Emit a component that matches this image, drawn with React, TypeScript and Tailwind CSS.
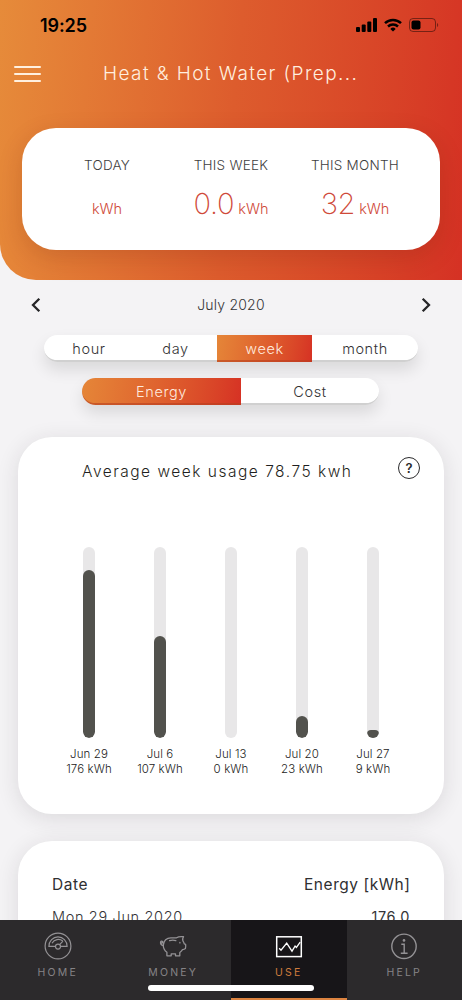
import type { ReactNode } from 'react';
import clsx from 'clsx';

type Week = {
  label: string;
  kwh: number;
  height: number;
};

const weeks: Week[] = [
  { label: 'Jun 29', kwh: 176, height: 168 },
  { label: 'Jul 6', kwh: 107, height: 102 },
  { label: 'Jul 13', kwh: 0, height: 0 },
  { label: 'Jul 20', kwh: 23, height: 22 },
  { label: 'Jul 27', kwh: 9, height: 8 },
];

function StatusBar() {
  return (
    <div className="flex h-[50px] items-center justify-between pl-10 pr-[22px] text-black">
      <span className="mt-[2px] text-[18px] font-semibold leading-none tracking-[-0.1px]">
        19:25
      </span>
      <div className="flex items-center gap-[7px]">
        <svg width="21" height="14" viewBox="0 0 21 14" fill="currentColor">
          <rect x="0" y="9" width="4" height="5" rx="1" />
          <rect x="5.7" y="6.5" width="4" height="7.5" rx="1" />
          <rect x="11.3" y="3.5" width="4" height="10.5" rx="1" />
          <rect x="17" y="0" width="4" height="14" rx="1" />
        </svg>
        <svg
          width="18"
          height="14"
          viewBox="0 0 18 14"
          fill="none"
          stroke="currentColor"
          strokeWidth="2.5"
        >
          <path d="M1 5.1a11.6 11.6 0 0 1 16 0" />
          <path d="M4 8.5a7.3 7.3 0 0 1 10 0" />
          <path d="M9 13.6 6.3 10.9a3.9 3.9 0 0 1 5.4 0Z" fill="currentColor" stroke="none" />
        </svg>
        <svg width="31" height="14" viewBox="0 0 31 14">
          <rect
            x="0.5"
            y="0.5"
            width="26"
            height="13"
            rx="3.5"
            fill="none"
            stroke="black"
            strokeOpacity="0.45"
          />
          <rect x="2.5" y="2.5" width="9" height="9" rx="2" />
          <path d="M28 5v4c1.6-.6 1.6-3.4 0-4Z" fillOpacity="0.45" />
        </svg>
      </div>
    </div>
  );
}

type StatProps = {
  title: string;
  value?: string;
};

function Stat({ title, value }: StatProps) {
  return (
    <div className="flex w-[124px] flex-col items-center whitespace-nowrap">
      <span className="text-[13.5px] font-light leading-5 tracking-[0.25px] text-[#3e3e40]">
        {title}
      </span>
      <span className="mt-[10px] h-9 text-[14.5px] font-light leading-[38px] text-[#cf4a3a]">
        {value ? (
          <>
            <span className="mr-1 text-[29px] font-extralight tracking-[-0.3px]">{value}</span>
            kWh
          </>
        ) : (
          <span className="block pt-[5px]">kWh</span>
        )}
      </span>
    </div>
  );
}

type SegmentProps = {
  active?: boolean;
  className: string;
  children: ReactNode;
};

function Segment({ active, className, children }: SegmentProps) {
  return (
    <button
      className={clsx(
        'flex h-[27px] items-center justify-center border-b-2 pt-[3px] text-[14.5px] font-light leading-none tracking-[0.6px]',
        active
          ? 'border-[#b8401f]/60 bg-linear-100 from-[#e58638] to-[#d63124] bg-origin-border text-[#ffeade]'
          : 'border-[#d0d0d0] bg-white text-[#333335]',
        className,
      )}
    >
      {children}
    </button>
  );
}

function Bar({ label, kwh, height }: Week) {
  return (
    <div className="flex w-[71px] flex-col items-center">
      <div className="flex h-[191px] w-3 items-end overflow-hidden rounded-full bg-[#e8e7e8]">
        <div className="w-full rounded-full bg-[#52524d]" style={{ height }} />
      </div>
      <span className="mt-[9px] whitespace-nowrap text-center text-[11.5px] font-light leading-[14.5px] tracking-[0.1px] text-[#222]">
        {label}
        <br />
        {kwh} kWh
      </span>
    </div>
  );
}

function GaugeIcon() {
  return (
    <svg width="28" height="28" viewBox="0 0 28 28" fill="none" stroke="currentColor" strokeWidth="1.2">
      <circle cx="14" cy="14" r="12.9" />
      <path d="M11.4 14.4H4.9a9.1 9.6 0 0 1 18.2 0h-6.5" />
      <circle cx="14" cy="14.6" r="2.5" />
      <path d="m15.6 12.7 3.4-3.5M8 11.2c2.4-4 7.2-4.9 10.8-2.2" />
    </svg>
  );
}

function PiggyIcon() {
  return (
    <svg
      width="28"
      height="28"
      viewBox="0 0 28 28"
      fill="none"
      stroke="currentColor"
      strokeWidth="1.3"
      strokeLinejoin="round"
      strokeLinecap="round"
    >
      <path d="M4.3 13.2C4.5 8.6 7.8 5.8 11.8 5.8h5.8c1.7-1.2 4-1.5 6.9-1.1-.9 1.5-1 2.8-.6 4.2.7.9 1.1 1.9 1.4 3l1.3.5c.3 1.4.2 2.8-.2 4.1-.8.7-1.8 1-2.9 1.2-.8 1.3-1.7 2.1-2.7 2.8v3.3h-4.3v-1.9h-4.3v1.9H7.9v-3.5c-2.5-1.9-3.7-4.2-3.6-7.1Z" />
      <path d="M4.3 13.6C2.2 13.2 1.2 11.6 1.6 10c.4-1.4 2.2-1.2 2.1.1-.1.8-.8 1.1-1.5.8M10.6 8.7c2.1-.8 4.2-.8 6.2 0M20.9 10.4v.5" />
    </svg>
  );
}

function ChartIcon() {
  return (
    <svg width="28" height="28" viewBox="0 0 28 28" fill="none" stroke="currentColor" strokeWidth="1.5">
      <rect x="1.7" y="4.8" width="24.6" height="19.8" />
      <path d="m4.2 16.3 1.800 1.900 5.700-7 5.300 8 3.100-5.200 1.300 1.400 3.800-5.200" strokeWidth="1.3" />
    </svg>
  );
}

function InfoIcon() {
  return (
    <svg width="28" height="28" viewBox="0 0 28 28" fill="none" stroke="currentColor" strokeWidth="1.4">
      <circle cx="14" cy="14.3" r="12.2" />
      <path d="M11.3 12.2h2.9v8.8M10.8 21.3h6.8" />
      <circle cx="14" cy="8.4" r="1.3" fill="currentColor" stroke="none" />
    </svg>
  );
}

type NavItemProps = {
  icon: ReactNode;
  label: string;
  active?: boolean;
};

function NavItem({ icon, label, active }: NavItemProps) {
  return (
    <a
      className={clsx(
        'flex flex-1 flex-col items-center border-b-2 pt-3',
        active
          ? 'border-[#dc8340] bg-[#171518] text-white'
          : 'border-transparent text-[#949295]',
      )}
    >
      {icon}
      <span
        className={clsx(
          'mt-[5px] text-[10.5px] leading-4 tracking-[2.2px]',
          active ? 'text-[#cf7c3d]' : 'text-[#858386]',
        )}
      >
        {label}
      </span>
    </a>
  );
}

export default function App() {
  return (
    <div className="relative flex h-[1000px] w-full flex-col overflow-hidden bg-[#f4f3f5] font-['Inter','Liberation_Sans',sans-serif]">
      <header className="h-[280px] shrink-0 rounded-bl-[36px] bg-linear-95 from-[#e68b3a] via-[#dd5c2d] to-[#d53124]">
        <StatusBar />
        <div className="flex h-12 items-center pl-[14px]">
          <div className="flex w-[27px] flex-col gap-[5px]">
            <span className="h-[2px] rounded-full bg-[#fff0df]" />
            <span className="h-[2px] rounded-full bg-[#fff0df]" />
            <span className="h-[2px] rounded-full bg-[#fff0df]" />
          </div>
          <h1 className="ml-[62px] mt-px whitespace-nowrap text-[19px] font-light tracking-[1.4px] text-[#ffeedf]">
            Heat &amp; Hot Water (Prep...
          </h1>
        </div>
        <section className="mx-[22px] mt-[30px] flex h-[122px] rounded-[34px] bg-white pl-[23px] pt-[27px] shadow-[0_8px_24px_rgba(100,30,10,0.18)]">
          <Stat title="TODAY" />
          <Stat title="THIS WEEK" value="0.0" />
          <Stat title="THIS MONTH" value="32" />
        </section>
      </header>

      <div className="flex h-[50px] shrink-0 items-center justify-between px-[30px]">
        <svg width="12" height="16" viewBox="0 0 12 16" fill="none" stroke="#252527" strokeWidth="2.3">
          <path d="M9.3 1.7 3 8l6.3 6.3" />
        </svg>
        <span className="-mt-[2px] text-[14px] font-light tracking-[0.2px] text-[#353537]">
          July 2020
        </span>
        <svg width="12" height="16" viewBox="0 0 12 16" fill="none" stroke="#252527" strokeWidth="2.3">
          <path d="M2.7 1.7 9 8l-6.3 6.3" />
        </svg>
      </div>

      <div className="mx-auto mt-[5px] flex w-[374px] shrink-0 rounded-full shadow-[0_8px_16px_rgba(0,0,0,0.11)]">
        <Segment className="w-[90px] rounded-l-full">hour</Segment>
        <Segment className="w-[83px]">day</Segment>
        <Segment active className="w-[95px]">
          week
        </Segment>
        <Segment className="w-[106px] rounded-r-full">month</Segment>
      </div>
      <div className="ml-[82px] mt-4 flex w-[297px] shrink-0 rounded-full shadow-[0_8px_16px_rgba(0,0,0,0.11)]">
        <Segment active className="w-[159px] rounded-l-full">
          Energy
        </Segment>
        <Segment className="w-[138px] rounded-r-full">Cost</Segment>
      </div>

      <section className="mx-[18px] mt-8 h-[377px] shrink-0 rounded-[34px] bg-white shadow-[0_4px_22px_rgba(40,30,40,0.12)]">
        <div className="flex h-[46px] items-start justify-between pl-[64px] pr-6 pt-5">
          <h2 className="mt-[3px] whitespace-nowrap text-[15.5px] font-light leading-6 tracking-[1.5px] text-[#1f1f21]">
            Average week usage 78.75 kwh
          </h2>
          <span className="flex size-[22px] items-center justify-center rounded-full border-[1.5px] border-[#2b2b2d] text-[13px] font-semibold leading-none text-[#2b2b2d]">
            ?
          </span>
        </div>
        <div className="ml-[35.5px] mt-[64px] flex">
          {weeks.map((week) => (
            <Bar key={week.label} {...week} />
          ))}
        </div>
      </section>

      <section className="mx-[18px] mt-[27px] h-[200px] shrink-0 rounded-[34px] bg-white px-[34px] pt-[32px] shadow-[0_4px_22px_rgba(40,30,40,0.12)]">
        <div className="flex justify-between text-[15.5px] leading-6 tracking-[0.55px] text-[#2f2f31]">
          <span>Date</span>
          <span className="-mr-[0.5px]">Energy [kWh]</span>
        </div>
        <div className="mt-2 flex justify-between text-[14.5px] leading-6 tracking-[0.65px] text-[#353537]">
          <span className="font-light">Mon 29 Jun 2020</span>
          <span>176.0</span>
        </div>
      </section>

      <nav className="absolute inset-x-0 bottom-0 flex h-20 bg-[#2c2a2c]">
        <NavItem icon={<GaugeIcon />} label="HOME" />
        <NavItem icon={<PiggyIcon />} label="MONEY" />
        <NavItem icon={<ChartIcon />} label="USE" active />
        <NavItem icon={<InfoIcon />} label="HELP" />
        <div className="absolute bottom-[9px] left-[148px] h-[6px] w-[166px] rounded-full bg-white" />
      </nav>
    </div>
  );
}
